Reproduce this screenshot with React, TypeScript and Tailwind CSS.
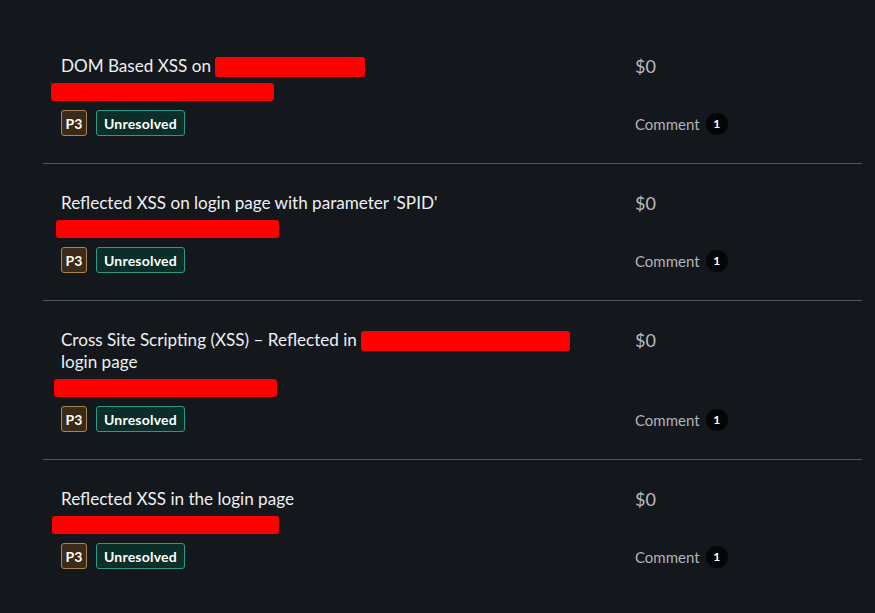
// Component - ReportList
const reports = [
    { id: 1, title: 'DOM Based XSS on', inlineRedact: 150, titleRest: '', redactWidth: 223, redactOffset: -10 },
    { id: 2, title: "Reflected XSS on login page with parameter 'SPID'", inlineRedact: 0, titleRest: '', redactWidth: 223, redactOffset: -5 },
    { id: 3, title: 'Cross Site Scripting (XSS) – Reflected in', inlineRedact: 209, titleRest: 'login page', redactWidth: 223, redactOffset: -7 },
    { id: 4, title: 'Reflected XSS in the login page', inlineRedact: 0, titleRest: '', redactWidth: 227, redactOffset: -9 },
];

function ReportRow(props: { report: (typeof reports)[number]; last: boolean }) {
    const report = props.report;
    return (
        <div className={'flex ' + (props.last ? '' : 'border-b border-[#50555c]')}>
            {/* Left */}
            <div className="w-[592px] pl-[18px] pt-[28px] pb-[27px]">
                <div className="pr-8 text-[17.1px] leading-[22px] text-[#eef0f3]">
                    {report.title}
                    {report.inlineRedact > 0 && (
                        <>
                            {' '}
                            <span className="inline-block h-[20px] rounded-[3px] bg-[#ff0000] align-[-5px]" style={{ width: report.inlineRedact }} />
                        </>
                    )}
                    {report.titleRest && (
                        <>
                            <br />
                            {report.titleRest}
                        </>
                    )}
                </div>
                <div className="mt-[6px] h-[18px] rounded-[3px] bg-[#ff0000]" style={{ width: report.redactWidth, marginLeft: report.redactOffset }} />
                <div className="mt-[9px] flex gap-[9px]">
                    <span className="flex h-[26px] w-[26px] items-center justify-center rounded-[3px] border border-[#a88554] bg-[#3a2a17] text-[14px] font-bold text-white">P3</span>
                    <span className="flex h-[26px] items-center rounded-[3px] border border-[#2c9a86] bg-[#0c2e29] px-[7px] text-[14px] font-bold tracking-[0.2px] text-white">Unresolved</span>
                </div>
            </div>

            {/* Right */}
            <div className="flex flex-1 flex-col justify-between pt-[27px] pb-[26px]">
                <div className="text-[18px] leading-[24px] text-[#b9bcc1]">$0</div>
                <div className="flex h-[26px] items-center gap-[6px] text-[15px] text-[#b1b4b9]">
                    Comment
                    <span className="flex h-[22px] w-[22px] items-center justify-center rounded-full bg-[#050607] text-[12px] font-bold text-white">1</span>
                </div>
            </div>
        </div>
    );
}

export default function App() {
    return (
        <div className="min-h-[613px] bg-[#14171c] pl-[43px] pr-[13px] pt-[27px] font-['Lato',sans-serif]">
            {reports.map(function (report, index) {
                return <ReportRow key={report.id} report={report} last={index == reports.length - 1} />;
            })}
        </div>
    );
}
